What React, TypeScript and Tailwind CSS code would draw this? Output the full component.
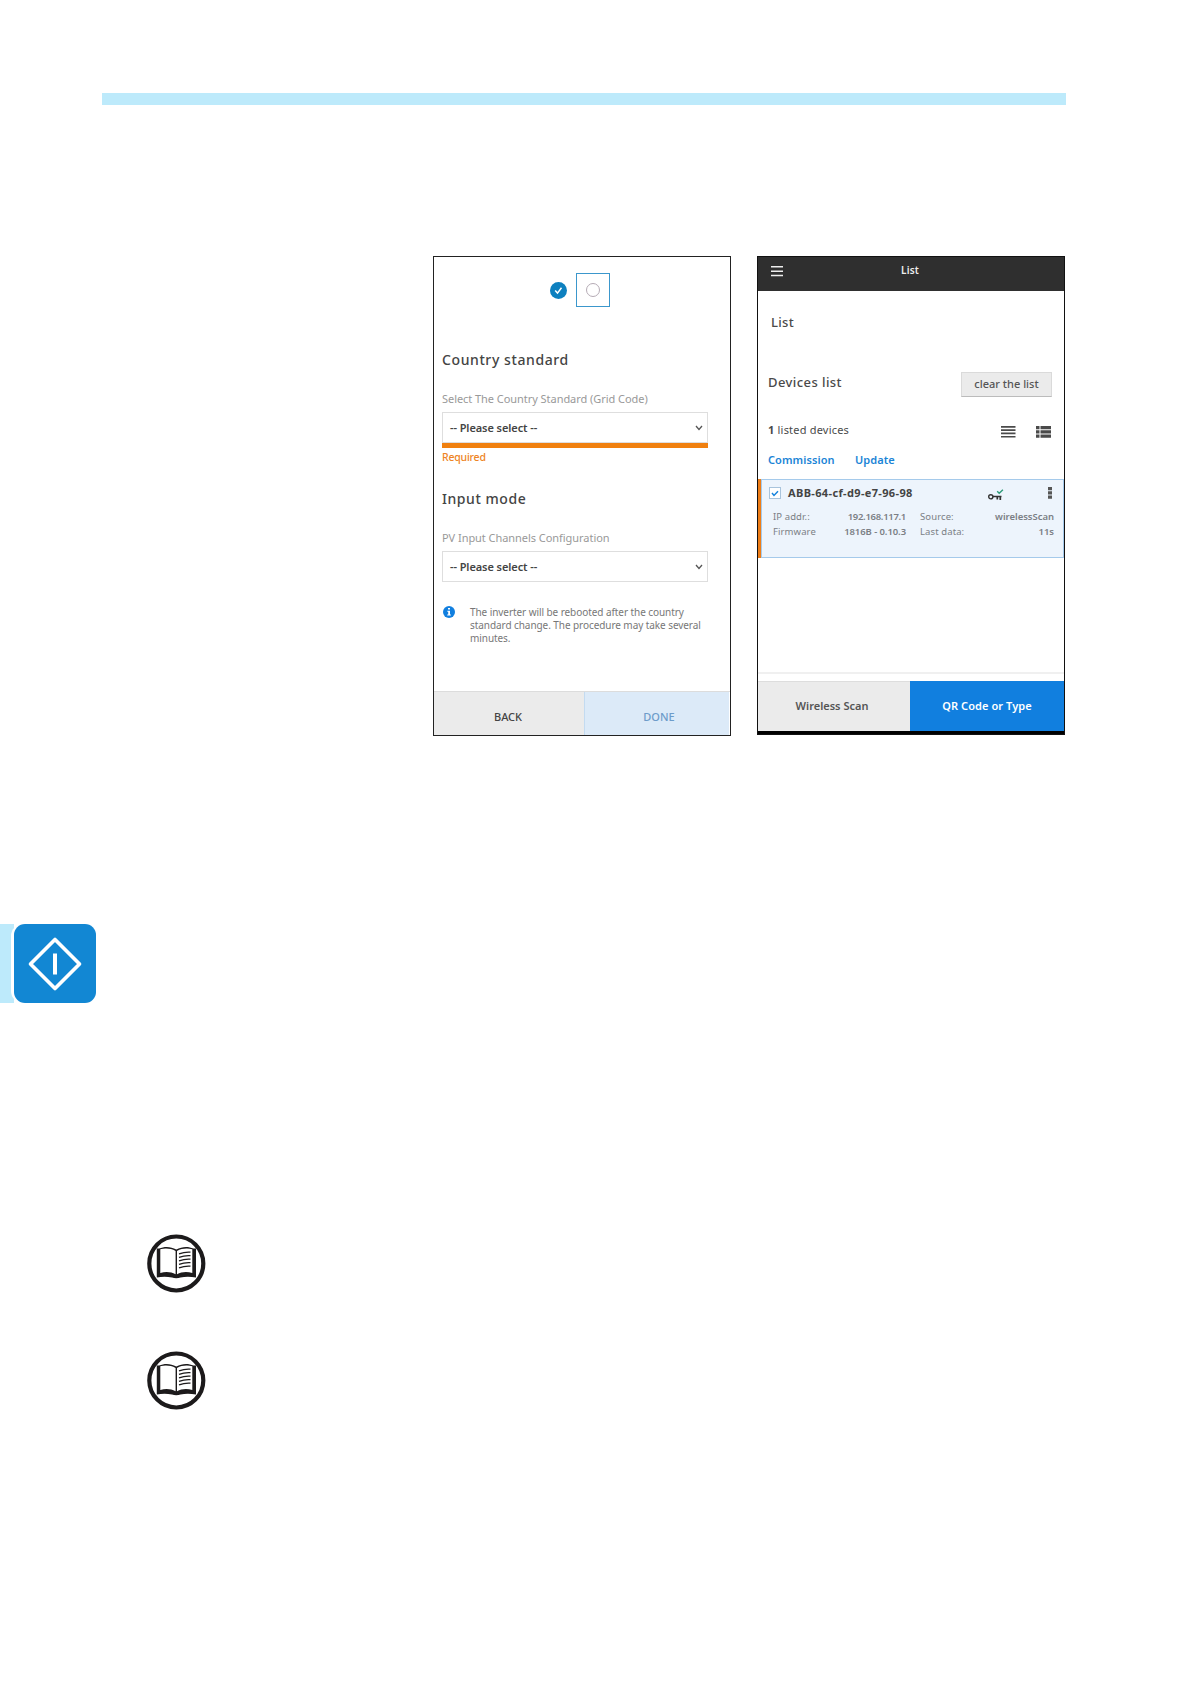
type SelectProps = {
  label: string
  required?: boolean
}

function BookIcon() {
  return (
    <svg viewBox="0 0 60 60" className="block size-[60px]">
      <circle cx="30.300" cy="30.500" r="27" fill="#fff" stroke="#1c1a1b" strokeWidth="4.200" />
      <path
        d="M10.800 15.500H13C19 13 25 13.500 30.300 16.500C35.600 13.500 42 13 47.500 15.500H50V44.500C44.500 43.500 39 43.500 34.500 44.500C32 45.600 28.500 45.600 26 44.500C21 43.500 16 43.500 10.800 44.500Z"
        fill="#1c1a1b"
      />
      <path
        d="M14.300 16.300C19.500 15 25 15.500 29.600 18V41.200C25 38.800 19.500 38.500 14.300 40ZM31 18C35.600 15.500 41 15 46.300 16.300V40C41 38.500 35.600 38.800 31 41.200Z"
        fill="#fff"
      />
      <path
        d="M33 20.800c4-1.500 7.500-2 11.500-1.700M33 24.300c4-1.500 7.500-2 11.500-1.700M33 27.800c4-1.500 7.500-2 11.500-1.700M33 31.300c4-1.500 7.500-2 11.500-1.700M33 34.800c4-1.500 7.500-2 11.500-1.700"
        fill="none"
        stroke="#1c1a1b"
        strokeWidth="1.300"
      />
    </svg>
  )
}

function SelectField({ label, required }: SelectProps) {
  return (
    <div className="mt-[21px] w-[266px]">
      <div className="whitespace-nowrap text-[11px] leading-4 tracking-[-0.050px] text-[#999]">{label}</div>
      <div className="mt-[5px] flex h-[31px] items-center justify-between border border-[#dedede] pl-[7px] pr-[4px]">
        <span className="text-[11px] font-semibold leading-4 tracking-[-0.080px] text-[#444]">-- Please select --</span>
        <svg viewBox="0 0 8 6" className="h-1.5 w-2" fill="none" stroke="#555" strokeWidth="1.300">
          <path d="M1 1l3 3.500L7 1" />
        </svg>
      </div>
      {required && (
        <>
          <div className="h-[5px] bg-[#f0800f]" />
          <div className="h-4 pt-px text-[10.500px] font-medium leading-4 tracking-[-0.200px] text-[#ee8424]">Required</div>
        </>
      )}
    </div>
  )
}

function CommissioningScreen() {
  return (
    <section className="flex h-[480px] w-[298px] flex-col border border-[#222] bg-white">
      <div className="flex h-[430px] flex-col pl-2 pt-4">
        {/* Wizard steps */}
        <div className="ml-[108px] flex h-[34px] items-center gap-[9px]">
          <svg viewBox="0 0 17 17" className="size-[17px]">
            <circle cx="8.500" cy="8.500" r="8.500" fill="#0d80bf" />
            <path d="M5.200 8.500l2.300 2.600 4-5.300" fill="none" stroke="#fff" strokeWidth="1.500" />
          </svg>
          <div className="flex size-[34px] items-center justify-center border border-[#3b97cc]">
            <div className="size-3.5 rounded-full border border-[#b5abb5]" />
          </div>
        </div>

        <h2 className="mt-[43px] text-[14px] font-medium leading-5 tracking-[0.600px] text-[#444]">Country standard</h2>
        <SelectField label="Select The Country Standard (Grid Code)" required />
        <h2 className="mt-[25px] text-[14px] font-medium leading-5 tracking-[0.550px] text-[#444]">Input mode</h2>
        <SelectField label="PV Input Channels Configuration" />

        <div className="mt-[23px] flex gap-[15px] pl-px">
          <svg viewBox="0 0 12 12" className="mt-px size-3">
            <circle cx="6" cy="6" r="6" fill="#117fdf" />
            <path d="M5 2h2v1.600H5zM4.300 4.700H7v3.800h.9v1H4.200v-1h1V5.700h-.9z" fill="#fff" />
          </svg>
          <p className="whitespace-nowrap pt-px text-[10px] leading-[13px] tracking-[-0.070px] text-[#777]">
            The inverter will be rebooted after the country
            <br />
            standard change. The procedure may take several
            <br />
            minutes.
          </p>
        </div>
      </div>
      <div className="mt-[4px] flex flex-1 border-t border-[#dcdcdc] pr-px text-[11px] font-medium">
        <div className="flex w-[150px] items-center justify-center bg-[#ebebeb] pr-0.5 pt-2 text-[#444]">BACK</div>
        <div className="flex flex-1 items-center justify-center border-l border-[#c3dbf1] bg-[#dceaf8] pl-1 pt-2 text-[#6d9cca]">DONE</div>
      </div>
    </section>
  )
}

function DeviceRow() {
  return (
    <div className="mt-[11px] flex h-[79px]">
      <div className="w-[3px] bg-[#ee7d17]" />
      <div className="flex-1 border border-[#a5caeb] bg-[#edf4fc] pt-[5px]">
        <div className="flex h-4 items-center pl-[7px]">
          <div className="flex size-3 items-center justify-center border border-[#a9c4dc] bg-white">
            <svg viewBox="0 0 8 7" className="h-[7px] w-2" fill="none" stroke="#1583dd" strokeWidth="1.500">
              <path d="M1 3l2 2.400L7 1.300" />
            </svg>
          </div>
          <span className="ml-[7px] w-[200px] text-[11px] font-bold leading-4 tracking-[0.360px] text-[#444]">ABB-64-cf-d9-e7-96-98</span>
          <svg viewBox="0 0 16 12" className="mt-1 h-3 w-4" fill="none">
            <circle cx="2.800" cy="7.800" r="2.100" stroke="#333" strokeWidth="1.400" />
            <path d="M5 7.500h8.500M9.300 7.500V10.500M12.300 7.500V11" stroke="#333" strokeWidth="1.700" />
            <path d="M9.200 2.200l2 2 3.700-3.500" stroke="#2c9a78" strokeWidth="1.400" />
          </svg>
          <svg viewBox="0 0 4 12" className="ml-11 h-3 w-1" fill="#555">
            <path d="M0 0h4v3.200H0zM0 4.300h4v3.200H0zM0 8.600h4v3.200H0z" />
          </svg>
        </div>
        <div className="mt-2 grid grid-cols-[133px_134px] gap-x-[14px] pl-[11px] text-[9.500px] leading-[15px] tracking-[0.100px] text-[#7b7f85]">
          <div className="flex justify-between">
            <span>IP addr.:</span>
            <span className="font-semibold tracking-[-0.300px]">192.168.117.1</span>
          </div>
          <div className="flex justify-between">
            <span>Source:</span>
            <span className="font-semibold tracking-[-0.030px]">wirelessScan</span>
          </div>
          <div className="flex justify-between">
            <span>Firmware</span>
            <span className="font-semibold tracking-[-0.080px]">1816B - 0.10.3</span>
          </div>
          <div className="flex justify-between">
            <span>Last data:</span>
            <span className="font-semibold tracking-[-0.030px]">11s</span>
          </div>
        </div>
      </div>
    </div>
  )
}

function DeviceListScreen() {
  return (
    <section className="flex h-[479px] w-[308px] flex-col border border-[#111] bg-white">
      <header className="flex h-[34px] items-start bg-[#2f2f2f] pl-[13px] pt-[9px]">
        <svg viewBox="0 0 12 11" className="h-[11px] w-3" fill="#eee">
          <path d="M0 0h12v1.500H0zM0 4.400h12v1.500H0zM0 8.800h12v1.500H0z" />
        </svg>
        <span className="-mt-1 ml-[118px] text-[10px] font-semibold leading-4 tracking-[0.200px] text-[#eee]">List</span>
      </header>

      <h1 className="ml-[13px] mt-[21px] text-[13px] font-medium leading-5 tracking-[0.300px] text-[#4a4a4a]">List</h1>
      <div className="mt-10 flex items-start justify-between pl-2.5 pr-3">
        <h2 className="text-[13px] font-medium leading-5 tracking-[0.420px] text-[#4a4a4a]">Devices list</h2>
        <div className="flex h-[25px] w-[91px] items-center justify-center border border-[#dadada] border-b-[#bbb] bg-[#ebebeb] text-[11px] font-medium text-[#555]">
          clear the list
        </div>
      </div>

      <div className="mt-[25px] flex h-4 items-center pl-2.5 text-[11px] leading-4 text-[#4a4a4a]">
        <span className="w-[233px] tracking-[0.200px]">
          <b>1</b> listed devices
        </span>
        <svg viewBox="0 0 15 12" className="mt-1 h-3 w-[15px]" fill="#4a4a4a">
          <path d="M0 0h14.500v1.700H0zM0 3.300h14.500V5H0zM0 6.600h14.500v1.700H0zM0 9.900h14.500v1.700H0z" />
        </svg>
        <svg viewBox="0 0 15 12" className="ml-5 mt-1 h-3 w-[15px]" fill="#4a4a4a">
          <path d="M0 0h3.500v3.300H0zM4.500 0H15v3.300H4.500zM0 4.200h3.500v3.300H0zM4.500 4.200H15v3.300H4.500zM0 8.400h3.500v3.300H0zM4.500 8.400H15v3.300H4.500z" />
        </svg>
      </div>
      <div className="mt-3.5 flex pl-2.5 text-[11px] font-semibold leading-4 tracking-[0.080px] text-[#1b84d6]">
        <span className="w-[87px]">Commission</span>
        <span>Update</span>
      </div>

      <DeviceRow />

      <div className="mt-[114px] h-0.5 bg-[#f0f0f0]" />
      <div className="mt-[7px] flex h-[50px] text-[11px] font-semibold">
        <div className="flex w-[152px] items-center justify-center border-t border-[#ddd] bg-[#ebebeb] pb-px pr-1 text-[#555]">Wireless Scan</div>
        <div className="flex flex-1 items-center justify-center bg-[#117fdf] tracking-[0.080px] text-white">QR Code or Type</div>
      </div>
      <div className="flex-1 bg-black" />
    </section>
  )
}

export default function App() {
  return (
    <main className="h-[1684px] w-[1191px] overflow-hidden bg-white font-['Noto_Sans',sans-serif]">
      <div className="ml-[102px] mt-[93px] h-3 w-[964px] bg-[#bdeafb]" />

      <div className="ml-[433px] mt-[151px] flex h-[480px] items-start gap-[26px]">
        <CommissioningScreen />
        <DeviceListScreen />
      </div>

      {/* Chapter tab */}
      <div className="mt-[188px] flex h-[79px]">
        <div className="w-[14px] bg-[#bdeafb]" />
        <div className="-ml-[3px] rounded-l-xl bg-white pl-[3px]">
          <svg viewBox="0 0 82 79" className="block h-[79px] w-[82px]">
            <rect width="82" height="79" rx="11" fill="#1287d3" />
            <path d="M41 15.500L65.500 40L41 64.500L16.500 40Z" fill="none" stroke="#fff" strokeWidth="3.700" strokeLinejoin="round" />
            <path d="M41 29.500v21" stroke="#fff" strokeWidth="4" />
          </svg>
        </div>
      </div>

      <div className="ml-[146px] mt-[230px] flex flex-col gap-[57px]">
        <BookIcon />
        <BookIcon />
      </div>
    </main>
  )
}
